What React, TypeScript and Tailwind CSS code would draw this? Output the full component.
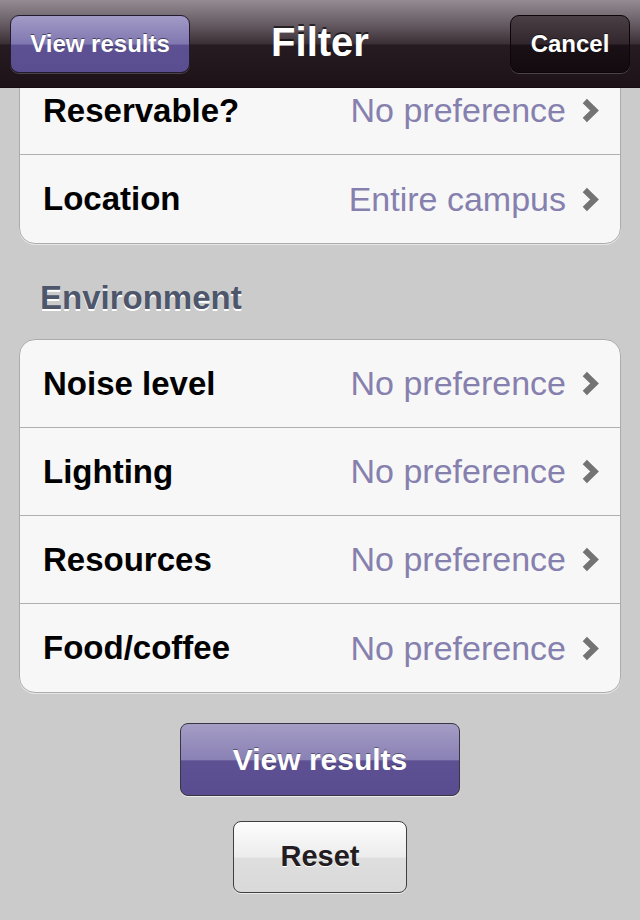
type Row = {
  label: string;
  value: string;
};

const locationRows: Row[] = [
  { label: 'Reservable?', value: 'No preference' },
  { label: 'Location', value: 'Entire campus' },
];

const environmentRows: Row[] = [
  { label: 'Noise level', value: 'No preference' },
  { label: 'Lighting', value: 'No preference' },
  { label: 'Resources', value: 'No preference' },
  { label: 'Food/coffee', value: 'No preference' },
];

function Chevron() {
  return (
    <svg width="17" height="25" viewBox="0 0 17 25" className="shrink-0">
      <polyline
        points="2.8,3 12.6,12.5 2.8,22"
        fill="none"
        stroke="#737373"
        strokeWidth="6"
        strokeLinejoin="miter"
      />
    </svg>
  );
}

function Group({ rows }: { rows: Row[] }) {
  return (
    <div className="overflow-hidden rounded-[16px] border border-[#acacac] bg-[#f7f7f7] shadow-[0_1px_0_#e6e6e6] divide-y divide-[#b0b0b0]">
      {rows.map((row) => (
        <div
          key={row.label}
          className="flex h-[88px] items-center pl-[23px] pr-[21px]"
        >
          <span className="flex-1 text-[33px] font-bold text-black">
            {row.label}
          </span>
          <span className="mr-[16px] text-[34px] text-[#8580ae]">
            {row.value}
          </span>
          <Chevron />
        </div>
      ))}
    </div>
  );
}

export default function App() {
  return (
    <div
      className="flex h-[920px] w-[640px] flex-col overflow-hidden bg-[#cbcbcb]"
      style={{ fontFamily: '"Liberation Sans", Arial, sans-serif' }}
    >
      <div className="relative z-10 grid h-[88px] shrink-0 grid-cols-[1fr_auto_1fr] items-center border-b border-[#140c11] bg-[linear-gradient(to_bottom,#958c93_0%,#62575e_30%,#3b3036_50%,#251b21_52%,#1c1218_100%)] px-[10px]">
        <button className="flex h-[58px] w-[180px] items-center justify-center justify-self-start rounded-[9px] border border-[#221a2e] bg-[linear-gradient(to_bottom,#a29bc6_0%,#8077b0_50%,#5d5194_52%,#5a4e90_100%)] text-[24px] font-bold text-white shadow-[0_1px_0_rgba(255,255,255,0.2)] [text-shadow:0_-1px_0_rgba(0,0,0,0.5)]">
          View results
        </button>
        <h1 className="-mt-[4px] text-[40px] font-bold text-white [text-shadow:0_-2px_0_rgba(0,0,0,0.6)]">
          Filter
        </h1>
        <button className="flex h-[58px] w-[120px] items-center justify-center justify-self-end rounded-[9px] border border-[#0c0609] bg-[linear-gradient(to_bottom,#4a3f45_0%,#30262b_50%,#1a1116_52%,#130a0f_100%)] text-[24px] font-bold text-white shadow-[0_1px_0_rgba(255,255,255,0.2)] [text-shadow:0_-1px_0_rgba(0,0,0,0.5)]">
          Cancel
        </button>
      </div>

      <div className="-mt-[22px] flex flex-col px-[19px]">
        <Group rows={locationRows} />

        <h2 className="mt-[34px] mb-[21px] pl-[21px] text-[33px] leading-[40px] font-bold text-[#4d566b] [text-shadow:0_2px_0_#ffffff]">
          Environment
        </h2>

        <Group rows={environmentRows} />

        <div className="mt-[30px] flex flex-col items-center">
          <button className="flex h-[73px] w-[280px] items-center justify-center rounded-[8px] border border-[#3a3540] bg-[linear-gradient(to_bottom,#a49dc4_0%,#8a81b5_50%,#5e5193_52%,#5a4d8f_100%)] text-[30px] font-bold text-white shadow-[0_1px_0_rgba(255,255,255,0.6)] [text-shadow:0_-1px_0_rgba(0,0,0,0.4)]">
            View results
          </button>
          <button className="mt-[25px] flex h-[72px] w-[174px] items-center justify-center rounded-[8px] border border-[#3f3f3f] bg-[linear-gradient(to_bottom,#fdfdfd_0%,#ececec_50%,#dedede_52%,#d9d9d9_100%)] text-[29px] font-bold text-[#231d21] shadow-[0_1px_0_rgba(255,255,255,0.6)] [text-shadow:0_1px_0_#ffffff]">
            Reset
          </button>
        </div>
      </div>
    </div>
  );
}
